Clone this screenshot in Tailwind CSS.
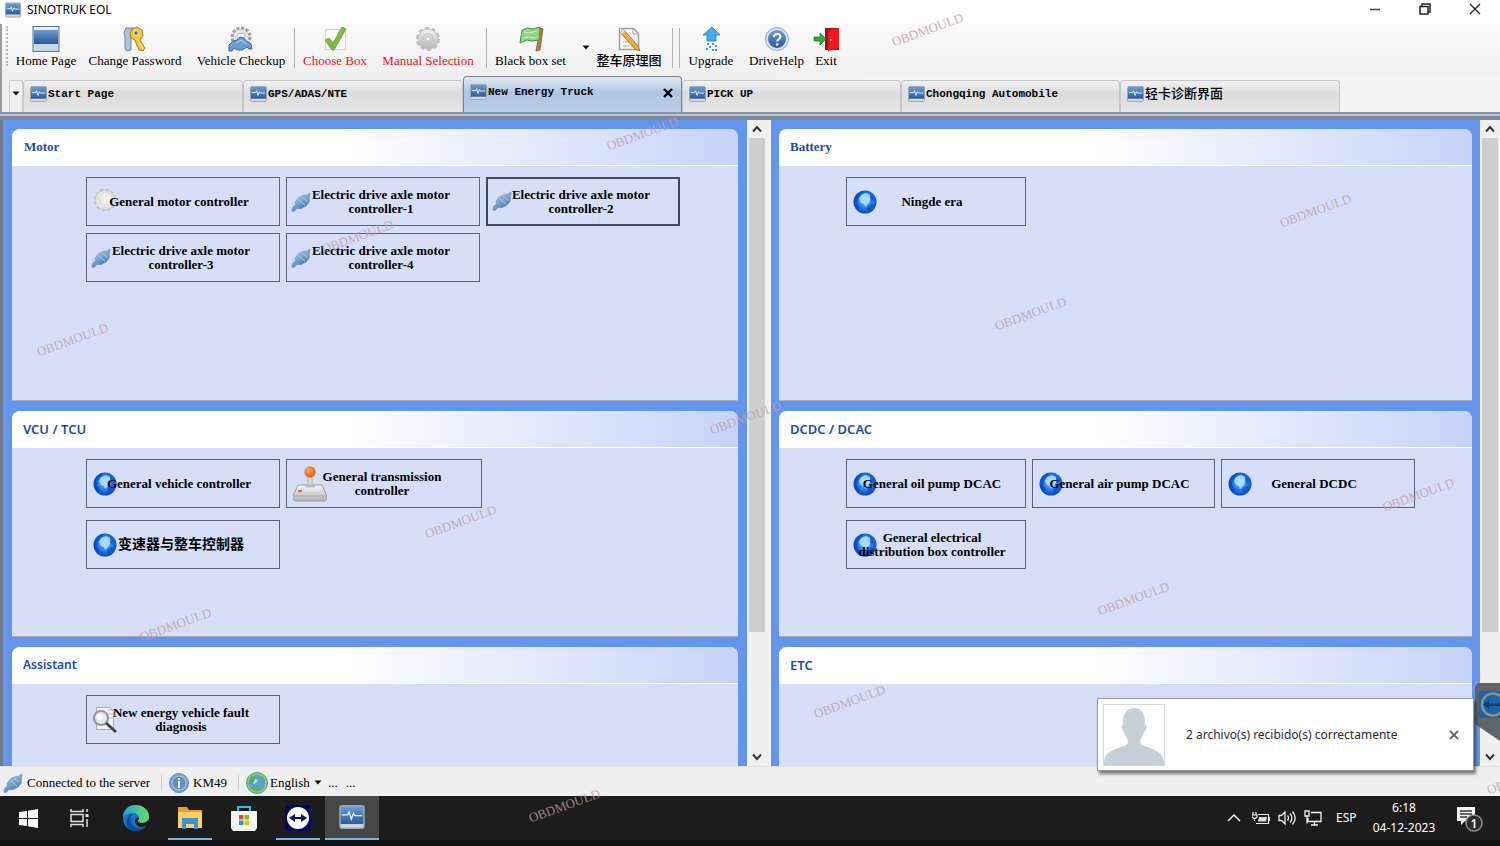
<!DOCTYPE html>
<html lang="en">
<head>
    <meta charset="UTF-8">
    <meta name="viewport" content="width=device-width, initial-scale=1.0">
    <title>SINOTRUK EOL</title>
    <script src="https://cdn.jsdelivr.net/npm/@tailwindcss/browser@4"></script>
</head>
<body class="bg-[#f0f0f0] text-black">

    <!-- Shared icons -->
    <svg class="absolute size-0" aria-hidden="true">
        <defs>
            <linearGradient id="gBlue" x1="0" y1="0" x2="0" y2="1"><stop offset="0" stop-color="#6c9bd0"/><stop offset="1" stop-color="#2c5c9c"/></linearGradient>
            <linearGradient id="gPlug" x1="0" y1="0" x2="0.6" y2="1"><stop offset="0" stop-color="#b4d0ec"/><stop offset="0.5" stop-color="#7ea9d4"/><stop offset="1" stop-color="#4272ac"/></linearGradient>
            <linearGradient id="gGray" x1="0" y1="0" x2="0" y2="1"><stop offset="0" stop-color="#f4f4f4"/><stop offset="1" stop-color="#b4b4b4"/></linearGradient>
            <linearGradient id="gEdge" x1="0" y1="0" x2="1" y2="0"><stop offset="0" stop-color="#1fa4dc"/><stop offset="1" stop-color="#6ad860"/></linearGradient>
            <radialGradient id="gGlobe" cx="0.5" cy="0.45" r="0.6"><stop offset="0" stop-color="#6cc4fa"/><stop offset="0.6" stop-color="#1c74e4"/><stop offset="1" stop-color="#0a34b4"/></radialGradient>
            <radialGradient id="gBall" cx="0.4" cy="0.35" r="0.7"><stop offset="0" stop-color="#ffa860"/><stop offset="1" stop-color="#dc5a10"/></radialGradient>
            <symbol id="app" viewBox="0 0 18 17">
                <rect x="0.5" y="0.5" width="17" height="16" rx="1.5" fill="#d5d9df" stroke="#9aa4b2"/>
                <rect x="1" y="1" width="16" height="12.5" fill="url(#gBlue)"/>
                <path d="M2 7h4l1-2 1.500 5 1.500-4 1 1.500h5" fill="none" stroke="#e4f2ff"/>
            </symbol>
            <symbol id="plug" viewBox="0 0 24 24">
                <path d="M1 22l1-4 3-2 0-4 4-5 6-3 4 0 3-3 1 1-1 5 0 5-4 5-6 3-5 0-3 3-2 1z" fill="url(#gPlug)" stroke="#7898bc" stroke-width="0.800"/>
                <path d="M9 9l8 7M13 6l7 5" stroke="#cfe2f5" stroke-width="0.800" fill="none"/>
            </symbol>
            <symbol id="globe" viewBox="0 0 24 24">
                <circle cx="12" cy="12" r="11.500" fill="url(#gGlobe)"/>
                <path d="M1 12c0-5 4-10 9-11l-2 4-3 3-1 5 3 5-2 2c-3-2-4-5-4-8z" fill="#0a3cc0" fill-opacity="0.600"/>
                <path d="M8 5l5-2 4 2 1 3-2 5-4 4-1-3-3-1-2-4z" fill="#b4e4fc" fill-opacity="0.850"/>
                <path d="M17 4l4 4-2 4-2-3zM15 16l4-2 1 2-3 4-3 0z" fill="#0f4cd0" fill-opacity="0.700"/>
            </symbol>
            <symbol id="gear" viewBox="0 0 26 26">
                <circle cx="13" cy="13" r="10.500" fill="none" stroke="#bdbdbd" stroke-width="3" stroke-dasharray="4.100 2.497"/>
                <circle cx="13" cy="13" r="10" fill="url(#gGray)" stroke="#bcbcbc" stroke-width="0.800"/>
                <circle cx="13" cy="13" r="5" fill="none" stroke="#c2c2c2"/>
                <circle cx="13" cy="13" r="2.300" fill="#fff" stroke="#aaa" stroke-width="0.800"/>
            </symbol>
            <symbol id="gear-light" viewBox="0 0 26 26">
                <circle cx="13" cy="13" r="11" fill="none" stroke="#c4c4c4" stroke-width="2.500" stroke-dasharray="3.800 1.960"/>
                <circle cx="13" cy="13" r="10.500" fill="#e2e2e2" stroke="#cacaca" stroke-width="0.800"/>
                <circle cx="14" cy="12" r="6" fill="#eeeeee"/>
            </symbol>
            <symbol id="up" viewBox="0 0 10 8"><path d="M1 6.500l4-4.500 4 4.500" fill="none" stroke="#333" stroke-width="2"/></symbol>
            <symbol id="down" viewBox="0 0 10 8"><path d="M1 1.500l4 4.500 4-4.500" fill="none" stroke="#333" stroke-width="2"/></symbol>
            <symbol id="caret" viewBox="0 0 8 5"><path d="M0.500 0.500h7L4 4.500z" fill="#111"/></symbol>
        </defs>
    </svg>

    <div class="relative flex h-screen flex-col overflow-hidden">

        <!-- Title bar -->
        <header class="flex h-6 shrink-0 items-start justify-between bg-white pl-[5px]">
            <div class="flex h-[19px] items-center gap-1.5">
                <svg class="size-4"><use href="#app"/></svg>
                <h1 class="font-['Noto_Sans',sans-serif] text-xs">SINOTRUK EOL</h1>
            </div>
            <div class="flex h-[17px]">
                <button class="flex w-[50px] items-center justify-center" aria-label="Minimize"><svg class="size-3" viewBox="0 0 12 12"><path d="M1 6.500h10" stroke="#444" stroke-width="1.500"/></svg></button>
                <button class="flex w-[50px] items-center justify-center" aria-label="Restore"><svg class="size-3" viewBox="0 0 12 12" fill="none" stroke="#222" stroke-width="1.500"><path d="M1 3.500h8v7.500H1zM3 3.500V1h8v8H9"/></svg></button>
                <button class="flex w-[50px] items-center justify-center" aria-label="Close"><svg class="size-3" viewBox="0 0 12 12"><path d="M1 1l10 10M11 1L1 11" stroke="#222" stroke-width="1.300"/></svg></button>
            </div>
        </header>

        <!-- Toolbar -->
        <nav class="flex h-[52px] shrink-0 items-start border-l-2 border-[#9a9da3] bg-linear-to-b from-[#fafafa] to-[#f0f0f0] font-['Liberation_Serif','Noto_Sans_CJK_SC',serif] text-[13px] leading-4 whitespace-nowrap">
            <div class="mt-0.5 mr-2 ml-1 h-10 border-l-2 border-dotted border-[#b5b5b5]"></div>
            <button class="flex w-[60px] flex-col items-center gap-px pt-0.5">
                <svg class="h-[26px] w-7" viewBox="0 0 28 26"><rect x="1" y="0.500" width="26" height="25" fill="#c9d6e8" stroke="#5b7494"/><rect x="2" y="1" width="24" height="3" fill="#e8eef6"/><rect x="2" y="4" width="24" height="13" fill="url(#gBlue)"/><path d="M2 17.500h24" stroke="#3c5c88"/></svg>
                Home Page
            </button>
            <button class="ml-3 flex w-[94px] flex-col items-center gap-px pt-0.5">
                <svg class="size-[26px]" viewBox="0 0 26 26"><path d="M4 2h8l3 4-2 5-4 1v12l-4 1-2-2V11L2 7z" fill="#aec3dc" stroke="#6d87a8"/><path d="M10 3l5-2 5 3 1 6-3 4 5 8-2 3-4-1-1-3-1-1-1-3-1-3-4-2-1-5z" fill="#f3c53c" stroke="#a87c18"/><circle cx="14" cy="7" r="2.300" fill="#3f70b4" stroke="#fff3b0"/><path d="M16 13l5 10" stroke="#fff0a0"/></svg>
                Change Password
            </button>
            <button class="ml-3.5 flex w-[90px] flex-col items-center gap-px pt-0.5">
                <svg class="size-[26px]" viewBox="0 0 26 26"><circle cx="13" cy="11" r="9" fill="#e4e4e4" stroke="#a0a0a0" stroke-width="3" stroke-dasharray="3 1.700"/><circle cx="13" cy="11" r="4" fill="#fafafa" stroke="#bbb"/><path d="M1 19l4-4 4-1 3-3 4 1 2 3 5 3 1 5h-3l-2-2-5 3H9l-3-2-2 3H1z" fill="#6c9dd2" stroke="#3d6ca4"/><path d="M8 17l5-3 6 4" stroke="#bcd8f4" fill="none"/></svg>
                Vehicle Checkup
            </button>
            <div class="mt-1 ml-2 h-10 border-l border-[#b4b4b4]"></div>
            <button class="ml-2 flex w-16 flex-col items-center gap-px pt-0.5 text-[#f01018]">
                <svg class="size-[26px]" viewBox="0 0 26 26"><rect x="3.500" y="3.500" width="20" height="20" fill="#fff" stroke="#d5d5d5"/><path d="M3 14l4-2 4 5L20 1l4 2-12 21h-2z" fill="#7fbb3c" stroke="#5c9a28" stroke-width="0.700"/></svg>
                Choose Box
            </button>
            <button class="ml-[15px] flex w-[92px] flex-col items-center gap-px pt-0.5 text-[#f01018]">
                <svg class="size-[26px]"><use href="#gear"/></svg>
                Manual Selection
            </button>
            <div class="mt-1 ml-3 h-10 border-l border-[#b4b4b4]"></div>
            <button class="ml-2 flex w-[71px] flex-col items-center gap-px pt-0.5">
                <svg class="size-[26px]" viewBox="0 0 26 26"><path d="M22 2l3 1-3 21-4 1z" fill="#b87838" stroke="#855020" stroke-width="0.700"/><path d="M4 4l5-2 5 1 8-2-1 13-7 1-5-1-7 3z" fill="#8fd48a" stroke="#469848"/><path d="M6 6l5 1 8-2M5 12l6-1 7 1" stroke="#cdf2c6" fill="none"/></svg>
                Black box set
            </button>
            <button class="ml-3 flex h-[46px] w-4 items-center justify-center" aria-label="Black box options"><svg class="h-[5px] w-2"><use href="#caret"/></svg></button>
            <button class="ml-0.5 flex w-[66px] flex-col items-center gap-px pt-0.5 font-medium">
                <svg class="size-[26px]" viewBox="0 0 26 26"><path d="M3.500 2.500h14l5 5v16h-19z" fill="#fafafa" stroke="#a0a0a0" stroke-width="1.500"/><path d="M17 2v6h6M7 16h8M7 20h6" fill="none" stroke="#aaa"/><path d="M4 6l3-3 15 17 2 5-5-2z" fill="#f2ac3c" stroke="#a87428"/><path d="M4 6l3-3 2 2-3 3z" fill="#e8e0d0"/></svg>
                整车原理图
            </button>
            <div class="mt-1 ml-2.5 h-10 w-2 border-x border-[#b4b4b4]"></div>
            <button class="ml-2 flex w-[46px] flex-col items-center gap-px pt-0.5">
                <svg class="size-[26px]" viewBox="0 0 26 26"><path d="M14 1l8 8h-4v6H9V9H5z" fill="#45a8ec" stroke="#2480c8" stroke-width="0.800"/><path d="M9 17h2v2H9zM14 17h2v2h-2zM17 19h2v2h-2zM11 20h2v2h-2zM8 22h2v2H8zM14 23h2v2h-2zM17 23h2v2h-2z" fill="#3a9be0"/></svg>
                Upgrade
            </button>
            <button class="ml-3.5 flex w-[57px] flex-col items-center gap-px pt-0.5">
                <svg class="size-[26px]" viewBox="0 0 26 26"><circle cx="13" cy="13" r="11.500" fill="#d6e2f0" stroke="#93a9c4"/><circle cx="13" cy="13" r="9" fill="url(#gBlue)"/><path d="M10 11c0-4 6.500-4 6.500-0.500 0 2.500-3.300 2.500-3.300 5" fill="none" stroke="#fff" stroke-width="2"/><circle cx="13.200" cy="18.500" r="1.300" fill="#fff"/></svg>
                DriveHelp
            </button>
            <button class="ml-2.5 flex w-[22px] flex-col items-center gap-px pt-0.5">
                <svg class="h-[26px] w-7 shrink-0" viewBox="0 0 28 26"><path d="M13 2h14v22H13z" fill="#a01018"/><path d="M16 4l11-2v20l-11 3z" fill="#f01820"/><path d="M2 11h6V7l6 6-6 6v-4H2z" fill="#2cac38" stroke="#127820" stroke-width="0.700"/><circle cx="19" cy="14" r="1" fill="#ffc0a0"/></svg>
                Exit
            </button>
        </nav>

        <!-- Document tabs -->
        <div class="flex h-9 shrink-0 items-end border-l-2 border-[#9a9da3] bg-linear-to-r from-[#f0f0f0] to-[#f3f3f3] pl-[7px] font-['Liberation_Mono','Noto_Sans_CJK_SC',monospace] text-[11px] font-bold" role="tablist">
            <button class="flex h-8 w-3.5 items-center justify-center border border-b-0 border-[#cfcfcf] bg-[#f1f1f1]" aria-label="Tab list"><svg class="mb-1.5 h-[5px] w-2"><use href="#caret"/></svg></button>
            <button class="flex h-8 w-[220px] items-start gap-px rounded-t-sm border border-b-0 border-[#c6c6c6] bg-linear-to-b from-[#f1f1f1] from-0% via-[#dddddd] via-40% to-[#e6e6e6] pt-[5px] pl-1.5" role="tab"><svg class="h-4 w-[17px]"><use href="#app"/></svg>Start Page</button>
            <button class="flex h-8 w-[220px] items-start gap-px rounded-t-sm border border-b-0 border-[#c6c6c6] bg-linear-to-b from-[#f1f1f1] from-0% via-[#dddddd] via-40% to-[#e6e6e6] pt-[5px] pl-1.5" role="tab"><svg class="h-4 w-[17px]"><use href="#app"/></svg>GPS/ADAS/NTE</button>
            <div class="flex h-9 w-[219px] items-start justify-between rounded-t-sm border border-b-0 border-[#7f858e] bg-linear-to-b from-[#e4eaf3] from-0% via-[#afc5e3] via-45% to-[#bacde8] pt-[7px] pr-1 pl-1.5">
                <button class="flex items-start gap-px" role="tab" aria-selected="true"><svg class="h-4 w-[17px]"><use href="#app"/></svg>New Energy Truck</button>
                <button class="p-1" aria-label="Close tab"><svg class="size-2.5" viewBox="0 0 10 10"><path d="M1 1l8 8M9 1L1 9" stroke="#000" stroke-width="2.400"/></svg></button>
            </div>
            <button class="flex h-8 w-[219px] items-start gap-px rounded-t-sm border border-b-0 border-[#c6c6c6] bg-linear-to-b from-[#f1f1f1] from-0% via-[#dddddd] via-40% to-[#e6e6e6] pt-[5px] pl-1.5" role="tab"><svg class="h-4 w-[17px]"><use href="#app"/></svg>PICK UP</button>
            <button class="flex h-8 w-[219px] items-start gap-px rounded-t-sm border border-b-0 border-[#c6c6c6] bg-linear-to-b from-[#f1f1f1] from-0% via-[#dddddd] via-40% to-[#e6e6e6] pt-[5px] pl-1.5" role="tab"><svg class="h-4 w-[17px]"><use href="#app"/></svg>Chongqing Automobile</button>
            <button class="flex h-8 w-[220px] items-start gap-px rounded-t-sm border border-b-0 border-[#c6c6c6] bg-linear-to-b from-[#f1f1f1] from-0% via-[#dddddd] via-40% to-[#e6e6e6] pt-[5px] pl-1.5" role="tab"><svg class="h-4 w-[17px]"><use href="#app"/></svg><span class="text-[13px] leading-[18px] font-medium">轻卡诊断界面</span></button>
        </div>
        <div class="h-2 shrink-0 border-t-2 border-b-4 border-t-[#8b929b] border-b-[#7f8995] bg-[#b0c4de]"></div>

        <!-- Workspace -->
        <main class="grid min-h-0 flex-1 grid-cols-[768fr_729fr] overflow-hidden border-l-[3px] border-[#6f7a8c] font-['Liberation_Serif','Noto_Sans_CJK_SC',serif] text-[13px] leading-3.5 font-bold">

            <div class="flex min-h-0 min-w-0">
                <div class="flex flex-1 flex-col gap-2.5 overflow-hidden bg-[#6495ed] px-[9px] pt-[9px]">
                    <section class="h-[272px] shrink-0 rounded-t-lg border-b border-[#a5a9b8] bg-[#d6dff7]">
                        <h2 class="flex h-[37px] items-center rounded-t-lg border-b border-white bg-linear-to-r from-white from-45% to-[#c6d3f7] pl-3 text-[#1b4bb4]">Motor</h2>
                        <div class="grid grid-cols-[repeat(3,194px)] gap-x-1.5 gap-y-[7px] pt-[11px] pl-[74px]">
                            <button class="relative h-[49px] border border-[#5b6278] pr-2"><svg class="absolute top-2.5 left-1.5 size-6"><use href="#gear-light"/></svg><span class="relative">General motor controller</span></button>
                            <button class="relative h-[49px] border border-[#5b6278] pr-1"><svg class="absolute top-3.5 left-1 size-5"><use href="#plug"/></svg><span class="relative">Electric drive axle motor<br>controller-1</span></button>
                            <button class="relative h-[49px] border-2 border-[#42495c] pr-1"><svg class="absolute top-3 left-1 size-5"><use href="#plug"/></svg><span class="relative">Electric drive axle motor<br>controller-2</span></button>
                            <button class="relative h-[49px] border border-[#5b6278] pr-1"><svg class="absolute top-3.5 left-1 size-5"><use href="#plug"/></svg><span class="relative">Electric drive axle motor<br>controller-3</span></button>
                            <button class="relative h-[49px] border border-[#5b6278] pr-1"><svg class="absolute top-3.5 left-1 size-5"><use href="#plug"/></svg><span class="relative">Electric drive axle motor<br>controller-4</span></button>
                        </div>
                    </section>
                    <section class="h-[226px] shrink-0 rounded-t-lg border-b border-[#a5a9b8] bg-[#d6dff7]">
                        <h2 class="flex h-[37px] items-center rounded-t-lg border-b border-white bg-linear-to-r from-white from-45% to-[#c6d3f7] pl-[11px] font-['Noto_Sans',sans-serif] text-[13px] font-semibold text-[#1b4bb4]">VCU / TCU</h2>
                        <div class="grid grid-cols-[194px_196px] gap-x-1.5 gap-y-3 pt-[11px] pl-[74px]">
                            <button class="relative h-[49px] border border-[#5b6278] pr-2"><svg class="absolute top-3 left-1.5 size-6"><use href="#globe"/></svg><span class="relative">General vehicle controller</span></button>
                            <button class="relative h-[49px] border border-[#5b6278] pr-1">
                                <svg class="absolute top-1.5 left-1.5 h-9 w-[34px]" viewBox="0 0 34 36"><path d="M5 19h24l5 11v3l-2 2H2l-2-2v-3z" fill="url(#gGray)" stroke="#999"/><path d="M1 30h32" stroke="#aaa"/><path d="M15 9h4v11h-4z" fill="#ddd" stroke="#999" stroke-width="0.700"/><ellipse cx="17" cy="20" rx="5" ry="1.500" fill="#bbb"/><circle cx="17" cy="6" r="5.700" fill="url(#gBall)"/><path d="M5 24h4v2H5z" fill="#e46a28"/></svg>
                                <span class="relative">General transmission<br>controller</span>
                            </button>
                            <button class="relative h-[49px] border border-[#5b6278] pr-1"><svg class="absolute top-3 left-1.5 size-6"><use href="#globe"/></svg><span class="relative text-sm">变速器与整车控制器</span></button>
                        </div>
                    </section>
                    <section class="h-[226px] shrink-0 rounded-t-lg bg-[#d6dff7]">
                        <h2 class="flex h-[37px] items-center rounded-t-lg border-b border-white bg-linear-to-r from-white from-45% to-[#c6d3f7] pl-[11px] font-['Noto_Sans',sans-serif] text-xs font-semibold text-[#1b4bb4]">Assistant</h2>
                        <div class="pt-[11px] pl-[74px]">
                            <button class="relative h-[49px] w-[194px] border border-[#5b6278] pr-1">
                                <svg class="absolute top-2.5 left-[5px] h-7 w-[26px]" viewBox="0 0 26 28"><path d="M4.500 1.500h13l4 4v18h-17z" fill="#f2f2f2" stroke="#aaa"/><path d="M16 4h4M17 8h4M17 12h4" stroke="#bbb"/><circle cx="9" cy="12" r="7" fill="#e3ebf2" stroke="#999" stroke-width="2.200"/><circle cx="8" cy="11" r="3" fill="#fff"/><path d="M14 17l10 9" stroke="#444" stroke-width="3"/></svg>
                                <span class="relative">New energy vehicle fault<br>diagnosis</span>
                            </button>
                        </div>
                    </section>
                </div>
                <div class="flex w-6 shrink-0 flex-col bg-[#f0f0f0] pl-0.5">
                    <button class="flex h-[18px] w-4 items-center justify-center" aria-label="Scroll up"><svg class="h-2 w-2.5"><use href="#up"/></svg></button>
                    <div class="flex-1"><div class="h-[81%] w-4 bg-[#cdcdcd]"></div></div>
                    <button class="flex h-[18px] w-4 items-center justify-center" aria-label="Scroll down"><svg class="h-2 w-2.5"><use href="#down"/></svg></button>
                </div>
            </div>

            <div class="flex min-h-0 min-w-0">
                <div class="flex flex-1 flex-col gap-2.5 overflow-hidden bg-[#6495ed] px-2 pt-[9px]">
                    <section class="h-[272px] shrink-0 rounded-t-lg border-b border-[#a5a9b8] bg-[#d6dff7]">
                        <h2 class="flex h-[37px] items-center rounded-t-lg border-b border-white bg-linear-to-r from-white from-45% to-[#c6d3f7] pl-[11px] text-[#1b4bb4]">Battery</h2>
                        <div class="pt-[11px] pl-[67px]">
                            <button class="relative h-[49px] w-[180px] border border-[#5b6278] pr-2"><svg class="absolute top-3 left-1.5 size-6"><use href="#globe"/></svg><span class="relative">Ningde era</span></button>
                        </div>
                    </section>
                    <section class="h-[226px] shrink-0 rounded-t-lg border-b border-[#a5a9b8] bg-[#d6dff7]">
                        <h2 class="flex h-[37px] items-center rounded-t-lg border-b border-white bg-linear-to-r from-white from-45% to-[#c6d3f7] pl-[11px] font-['Noto_Sans',sans-serif] text-[13px] font-semibold text-[#1b4bb4]">DCDC / DCAC</h2>
                        <div class="grid grid-cols-[180px_183px_194px] gap-x-1.5 gap-y-3 pt-[11px] pl-[67px]">
                            <button class="relative h-[49px] border border-[#5b6278] pr-2"><svg class="absolute top-3 left-1.5 size-6"><use href="#globe"/></svg><span class="relative">General oil pump DCAC</span></button>
                            <button class="relative h-[49px] border border-[#5b6278] pr-2"><svg class="absolute top-3 left-1.5 size-6"><use href="#globe"/></svg><span class="relative">General air pump DCAC</span></button>
                            <button class="relative h-[49px] border border-[#5b6278] pr-2"><svg class="absolute top-3 left-1.5 size-6"><use href="#globe"/></svg><span class="relative">General DCDC</span></button>
                            <button class="relative h-[49px] border border-[#5b6278] pr-2"><svg class="absolute top-3 left-1.5 size-6"><use href="#globe"/></svg><span class="relative">General electrical<br>distribution box controller</span></button>
                        </div>
                    </section>
                    <section class="h-[226px] shrink-0 rounded-t-lg bg-[#d6dff7]">
                        <h2 class="flex h-[37px] items-center rounded-t-lg border-b border-white bg-linear-to-r from-white from-45% to-[#c6d3f7] pl-[11px] font-['Noto_Sans',sans-serif] text-[13px] font-semibold text-[#1b4bb4]">ETC</h2>
                    </section>
                </div>
                <div class="flex w-5 shrink-0 flex-col bg-[#f0f0f0] pl-0.5">
                    <button class="flex h-[18px] w-4 items-center justify-center" aria-label="Scroll up"><svg class="h-2 w-2.5"><use href="#up"/></svg></button>
                    <div class="flex-1"><div class="h-[81%] w-4 bg-[#cdcdcd]"></div></div>
                    <button class="flex h-[18px] w-4 items-center justify-center" aria-label="Scroll down"><svg class="h-2 w-2.5"><use href="#down"/></svg></button>
                </div>
            </div>
        </main>

        <!-- Status bar -->
        <div class="flex h-[30px] shrink-0 items-center border-t border-[#e2e2e2] bg-[#f0f0f0] pt-0.5 pl-[3px] font-['Liberation_Serif',serif] text-[13px]">
            <svg class="mr-1 size-5"><use href="#plug"/></svg>
            <span class="w-[127px]">Connected to the server</span>
            <span class="mx-[7px] h-4 border-l border-[#d0d0d0]"></span>
            <svg class="mr-1 size-5" viewBox="0 0 20 20"><circle cx="10" cy="10" r="9.500" fill="#7ba3d0" stroke="#5d87b8"/><circle cx="10" cy="10" r="7" fill="#5f90c8" stroke="#b5cce6"/><path d="M9 5h2v2H9zM9 8h2v7H9z" fill="#fff"/></svg>
            <span class="w-[38px]">KM49</span>
            <span class="mx-[7px] h-4 border-l border-[#d0d0d0]"></span>
            <svg class="mr-0.5 size-[22px]" viewBox="0 0 22 22"><circle cx="11" cy="11" r="10.500" fill="#8cc68c" stroke="#5c9c64"/><circle cx="11" cy="11" r="8" fill="#52b060"/><path d="M11 3l5 3 3 6-2 5-3 1-1-4-5 1-3 2-1-4 3-4z" fill="#5aa2dc"/><path d="M9 7l3 1-2 3-3 1z" fill="#b8ecb0"/></svg>
            <select class="w-11 appearance-none bg-transparent" aria-label="Language"><option>English</option></select>
            <svg class="h-[5px] w-2"><use href="#caret"/></svg>
            <span class="ml-1.5">...</span><span class="ml-2">...</span>
        </div>

        <!-- Windows taskbar -->
        <footer class="flex h-[50px] shrink-0 justify-between border-b-[6px] border-[#111] bg-[#1c1c1c] pl-px font-['Noto_Sans',sans-serif] text-xs text-white">
            <div class="flex">
                <button class="flex w-[54px] items-center justify-center" aria-label="Start"><svg class="size-[19px]" viewBox="0 0 19 19"><path d="M0 3l8-1v7H0zM9 1.800L19 0v9H9zM0 10h8v7l-8-1zM9 10h10v9L9 17.200z" fill="#fff"/></svg></button>
                <button class="flex w-[50px] items-center justify-center" aria-label="Task view"><svg class="size-5" viewBox="0 0 20 20" fill="none" stroke="#ddd" stroke-width="1.500"><path d="M1 1v2.500h12V1M1 6.500h12v7H1zM1 19v-2.500h12V19M17 1v3M17 11v8"/><path d="M15.500 6h3v3h-3z" fill="#ddd" stroke="none"/></svg></button>
                <button class="ml-1 flex w-[54px] items-center justify-center" aria-label="Edge">
                    <svg class="size-7" viewBox="0 0 28 28"><circle cx="14" cy="14" r="13" fill="#1478cc"/><path d="M1 12C2 4 8 1 14 1c8 0 13 6 13 11 0 4-3 7-7 7-3 0-5-1-4-3 1-1 1-1 1-2 0-3-3-5-6-5-5 0-9 2-10 5z" fill="url(#gEdge)"/><path d="M10 10c-4 6 0 14 8 14 4 0 6-2 7-3-3 5-8 6-12 6C6 26 3 20 5 15c1-3 3-4 5-5z" fill="#0c4c94"/><path d="M17 14c0 1 0 1-1 2-1 2 1 3 4 3 3 0 5-1 6.500-3L28 21l-4 1c-4 2-10 1-11-4-.500-3 2-5 4-4z" fill="#1c1c1c"/></svg>
                </button>
                <button class="flex w-[54px] flex-col items-center justify-between pt-2" aria-label="File Explorer">
                    <svg class="h-7 w-[26px]" viewBox="0 0 26 28"><path d="M1 3h9l2 3h13v18H1z" fill="#e8a02c"/><path d="M1 8h24v16H1z" fill="#fcd264"/><path d="M5 14h16v11h-4v-5H9v5H5z" fill="#3c94d4"/></svg>
                    <span class="h-0.5 w-11 bg-[#76b4e8]"></span>
                </button>
                <button class="flex w-[54px] items-center justify-center" aria-label="Store"><svg class="size-7" viewBox="0 0 28 28"><path d="M8 8V3h12v5" fill="none" stroke="#36b8e4" stroke-width="2"/><path d="M1 7h26v17l-2 3H3l-2-3z" fill="#f5f5f5"/><path d="M9 11h4.500v4.500H9z" fill="#e84c24"/><path d="M14.500 11H19v4.500h-4.500z" fill="#7cb820"/><path d="M9 16.500h4.500V21H9z" fill="#1c9ce0"/><path d="M14.500 16.500H19V21h-4.500z" fill="#f8b808"/></svg></button>
                <button class="flex w-[54px] flex-col items-center justify-between pt-[9px]" aria-label="TeamViewer">
                    <svg class="size-[26px]" viewBox="0 0 26 26"><rect width="26" height="26" rx="2" fill="#04085c"/><circle cx="13" cy="13" r="11" fill="#fff"/><path d="M4 13l6-4v3h6V9l6 4-6 4v-3h-6v3z" fill="#04085c"/></svg>
                    <span class="h-0.5 w-11 bg-[#76b4e8]"></span>
                </button>
                <button class="flex w-[54px] flex-col items-center justify-between bg-[#474747] pt-[9px]" aria-label="SINOTRUK EOL">
                    <svg class="h-6 w-[26px]"><use href="#app"/></svg>
                    <span class="h-0.5 w-full bg-[#76b4e8]"></span>
                </button>
            </div>
            <div class="flex items-center">
                <button class="flex w-7 justify-center" aria-label="Show hidden icons"><svg class="h-2 w-3.5" viewBox="0 0 14 8"><path d="M1 7l6-6 6 6" fill="none" stroke="#eee" stroke-width="1.500"/></svg></button>
                <svg class="mx-1 h-4 w-[18px]" viewBox="0 0 18 16"><path d="M7 7h8l-1 4.500H6z" fill="#ddd"/><path d="M6 4.500h10.500v9H4M17.500 7v4M1 2v3M4 2v3M0 5h5v2L2.500 9 0 7zM2.500 8v3" fill="none" stroke="#eee" stroke-width="1.200"/></svg>
                <svg class="mx-1 h-4 w-[18px]" viewBox="0 0 18 16" fill="none" stroke="#eee" stroke-width="1.300"><path d="M1 5.500h2.500L7 2v12l-3.500-3.500H1zM9.500 5.500c1.300 1.500 1.300 3.500 0 5M12 3.500c2.500 2.500 2.500 6.500 0 9M14.500 1.500c3.300 4 3.300 9 0 13"/></svg>
                <svg class="mx-1 h-4 w-[18px]" viewBox="0 0 18 16" fill="none" stroke="#eee" stroke-width="1.300"><path d="M7 2.500h10v9H4V8M1 1h4v5H1zM3 6v7.500M7 15h7M10.500 11.500V15"/></svg>
                <span class="ml-2.5 w-[22px]">ESP</span>
                <div class="ml-2.5 w-[72px] text-center leading-5"><p>6:18</p><p>04-12-2023</p></div>
                <button class="mr-[17px] ml-4 flex" aria-label="1 new notification"><svg class="h-7 w-[27px]" viewBox="0 0 27 28"><path d="M1 3h18v14H9l-4 4v-4H1z" fill="#f4f4f4"/><path d="M4 7h12M4 10h12M4 13h7" stroke="#333" stroke-width="1.300"/><circle cx="18" cy="19" r="8" fill="#2b2b2b" stroke="#8a8a8a" stroke-width="1.500"/><text x="18" y="23.500" text-anchor="middle" font-size="12" font-weight="600" fill="#fff">1</text></svg></button>
            </div>
        </footer>

        <!-- TeamViewer side handle -->
        <svg class="absolute right-0 bottom-[105px] h-[58px] w-[25px]" viewBox="0 0 25 58"><path d="M3 0h22v58L0 41V4z" fill="#606367"/><rect x="4" y="8" width="21" height="27" fill="#1b64a4"/><circle cx="18" cy="21.500" r="11" fill="none" stroke="#8a9096" stroke-width="2.500"/><path d="M8 21.500l6-4v3h11v2.500H14v3z" fill="#0d3f70"/></svg>

        <!-- Transfer notification -->
        <aside class="absolute right-[26px] bottom-[75px] flex h-[73px] w-[377px] items-center border border-[#9a9a9a] bg-white pr-2.5 pl-[5px] font-['Noto_Sans',sans-serif] text-xs text-[#2c2c34] shadow-[2px_3px_3px_rgba(0,0,0,0.5)]">
            <svg class="size-[62px]" viewBox="0 0 62 62"><rect x="0.500" y="0.500" width="61" height="61" fill="#fff" stroke="#d8d8d8"/><path d="M1 61c0-8 2-11 9-15 8-4 15-4 15-8 0-3-3-5-4-10-3-1-3-7-1-8 0-10 3-16 11-16s11 6 11 16c2 1 2 7-1 8-1 5-4 7-4 10 0 4 7 4 15 8 7 4 9 7 9 15z" fill="#c5d0d8"/></svg>
            <p class="ml-[21px] flex-1">2 archivo(s) recibido(s) correctamente</p>
            <button class="p-1" aria-label="Close notification"><svg class="size-2.5" viewBox="0 0 10 10"><path d="M1 1l8 8M9 1L1 9" stroke="#666" stroke-width="1.800"/></svg></button>
        </aside>

        <!-- Watermark -->
        <div class="pointer-events-none absolute inset-0 overflow-hidden font-['Liberation_Serif',serif] text-[13px] leading-4 text-[#c09ca8]/80 select-none">
            <span class="absolute top-[22px] left-[890px] -rotate-20">OBDMOULD</span>
            <span class="absolute top-[126px] left-[605px] -rotate-20">OBDMOULD</span>
            <span class="absolute top-[229px] left-[320px] -rotate-20">OBDMOULD</span>
            <span class="absolute top-[332px] left-[35px] -rotate-20">OBDMOULD</span>
            <span class="absolute top-[203px] left-[1278px] -rotate-20">OBDMOULD</span>
            <span class="absolute top-[306px] left-[993px] -rotate-20">OBDMOULD</span>
            <span class="absolute top-[410px] left-[708px] -rotate-20">OBDMOULD</span>
            <span class="absolute top-[514px] left-[423px] -rotate-20">OBDMOULD</span>
            <span class="absolute top-[617px] left-[138px] -rotate-20">OBDMOULD</span>
            <span class="absolute top-[487px] left-[1381px] -rotate-20">OBDMOULD</span>
            <span class="absolute top-[591px] left-[1096px] -rotate-20">OBDMOULD</span>
            <span class="absolute top-[694px] left-[812px] -rotate-20">OBDMOULD</span>
            <span class="absolute top-[798px] left-[527px] -rotate-20">OBDMOULD</span>
            <span class="absolute top-[770px] left-[1485px] -rotate-20">OBDMOULD</span>
        </div>
    </div>
</body>
</html>
